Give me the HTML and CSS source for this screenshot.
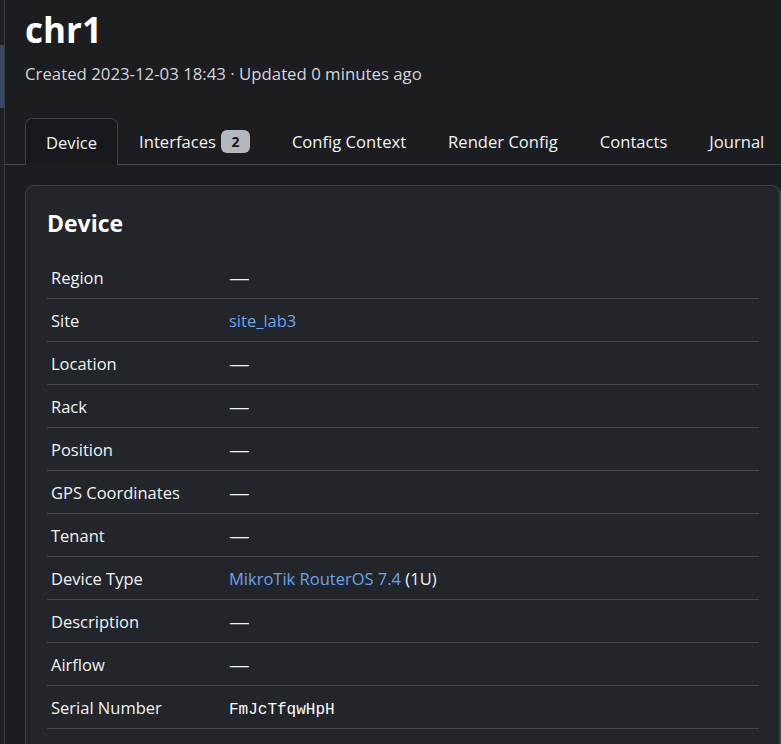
FILE: index.html
```html
<!DOCTYPE html>
<html lang="en">
<head>
<meta charset="utf-8">
<title>chr1</title>
<link rel="stylesheet" href="styles.css">
</head>
<body>
<div class="layout">
  <aside class="sidebar"><div class="sidebar-active"></div></aside>
  <main class="main">
    <header class="page-header">
      <h1 class="title">chr1</h1>
      <div class="meta">Created 2023-12-03 18:43 · Updated 0 minutes ago</div>
    </header>
    <nav class="tabs">
      <a class="tab active">Device</a>
      <a class="tab">Interfaces <span class="badge">2</span></a>
      <a class="tab">Config Context</a>
      <a class="tab">Render Config</a>
      <a class="tab">Contacts</a>
      <a class="tab">Journal</a>
    </nav>
    <section class="card">
      <h2 class="card-title">Device</h2>
      <table class="attrs">
        <tr><th>Region</th><td><span class="dash">—</span></td></tr>
        <tr><th>Site</th><td><a class="link">site_lab3</a></td></tr>
        <tr><th>Location</th><td><span class="dash">—</span></td></tr>
        <tr><th>Rack</th><td><span class="dash">—</span></td></tr>
        <tr><th>Position</th><td><span class="dash">—</span></td></tr>
        <tr><th>GPS Coordinates</th><td><span class="dash">—</span></td></tr>
        <tr><th>Tenant</th><td><span class="dash">—</span></td></tr>
        <tr><th>Device Type</th><td><a class="link">MikroTik RouterOS 7.4</a> (1U)</td></tr>
        <tr><th>Description</th><td><span class="dash">—</span></td></tr>
        <tr><th>Airflow</th><td><span class="dash">—</span></td></tr>
        <tr><th>Serial Number</th><td><span class="mono">FmJcTfqwHpH</span></td></tr>
        <tr><th>Asset Tag</th><td><span class="dash">—</span></td></tr>
      </table>
    </section>
  </main>
</div>
</body>
</html>
```
FILE: styles.css
```css
html, body {
  margin: 0;
  padding: 0;
  background: #1b1d20;
  color: #f1f3f5;
  font-family: "Open Sans", "Noto Sans", sans-serif;
  font-size: 16px;
  height: 100%;
  overflow: hidden;
}
.layout {
  display: flex;
  min-height: 100%;
}
.sidebar {
  width: 4px;
  flex: 0 0 4px;
  background: #1f2124;
  border-right: 1px solid #3a3d42;
  padding-top: 45px;
}
.sidebar-active {
  height: 63px;
  background: #394a65;
}
.main {
  flex: 1;
  padding-left: 20px;
  min-width: 0;
}
.page-header {
  padding-top: 6px;
}
.title {
  margin: 0;
  font-size: 35px;
  font-weight: 700;
  line-height: 48px;
  color: #ffffff;
}
.meta {
  margin-top: 8px;
  font-size: 16.8px;
  color: #d3d6da;
  line-height: 24px;
}
.tabs {
  display: flex;
  align-items: flex-end;
  margin-top: 31px;
  margin-left: -21px;
  padding-left: 21px;
  border-bottom: 1px solid #45484d;
  height: 47px;
}
.tab {
  display: flex;
  align-items: center;
  gap: 5px;
  height: 46px;
  padding: 0 20px;
  color: #f1f3f5;
  font-size: 16.6px;
  border: 1px solid transparent;
  border-bottom: none;
  border-radius: 7px 7px 0 0;
  white-space: nowrap;
  box-sizing: border-box;
}
.tab.active {
  background: #17191c;
  border-color: #3f4247;
  height: 47px;
  margin-bottom: -1px;
}
.badge {
  display: inline-flex;
  align-items: center;
  justify-content: center;
  background: #b4b9bf;
  color: #15171a;
  font-weight: 700;
  font-size: 14px;
  width: 29px;
  height: 23px;
  border-radius: 6px;
}
.card {
  margin-top: 20px;
  background: #222529;
  border: 1px solid #3c3f44;
  border-right: 2px solid #3c3f44;
  border-radius: 9px;
  padding: 21px 20px 0 21px;
}
.card-title {
  margin: 0;
  font-size: 23px;
  font-weight: 700;
  line-height: 32px;
  color: #ffffff;
}
.attrs {
  width: 100%;
  border-collapse: collapse;
  margin-top: 17px;
}
.attrs tr {
  border-top: 1px solid #45484d;
}
.attrs tr:first-child {
  border-top: none;
}
.attrs th, .attrs td {
  height: 42px;
  padding: 0 5px 0 4px;
  text-align: left;
  font-weight: 400;
  font-size: 16.5px;
  color: #f1f3f5;
  vertical-align: middle;
}
.attrs th {
  width: 169px;
}
.link {
  color: #6aa3ee;
}
.dash {
  color: #f1f3f5;
  display: inline-block;
  transform: scaleX(1.25);
  transform-origin: left center;
}
.mono {
  font-family: "Liberation Mono", "DejaVu Sans Mono", monospace;
  font-size: 16px;
  color: #ffffff;
}
```
